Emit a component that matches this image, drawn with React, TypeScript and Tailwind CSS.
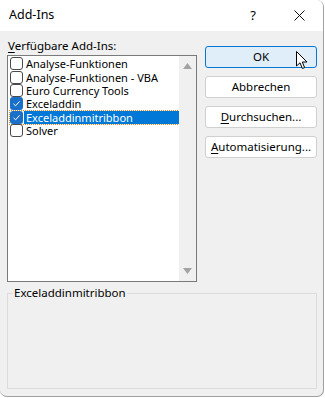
import React from 'react';

const font = { fontFamily: '"Segoe UI", "Noto Sans", "Liberation Sans", sans-serif' };

const items = [
  { label: 'Analyse-Funktionen', checked: false },
  { label: 'Analyse-Funktionen - VBA', checked: false },
  { label: 'Euro Currency Tools', checked: false },
  { label: 'Exceladdin', checked: true },
  { label: 'Exceladdinmitribbon', checked: true, selected: true },
  { label: 'Solver', checked: false },
];

function CheckBox({ checked }: { checked: boolean }) {
  if (checked) {
    return (
      <div className="flex h-[13px] w-[13px] shrink-0 items-center justify-center rounded-[3px] bg-[#1a6fc9]">
        <svg width="9" height="9" viewBox="0 0 9 9" fill="none">
          <path d="M1.5 4.8 L3.6 6.8 L7.6 2.3" stroke="white" strokeWidth="1" />
        </svg>
      </div>
    );
  }
  return <div className="h-[13px] w-[13px] shrink-0 rounded-[3px] border border-[#4a4a4a] bg-white" />;
}

function Btn({ children, primary }: { children: React.ReactNode; primary?: boolean }) {
  return (
    <div
      className={
        'flex h-[22px] w-[112px] items-center justify-center rounded-[3px] border text-[11.5px] text-black ' +
        (primary ? 'border-[#0078d4] bg-[#e0eef9]' : 'border-[#d0d0d0] bg-white')
      }
    >
      {children}
    </div>
  );
}

export default function App() {
  return (
    <div className="h-[398px] w-[325px] overflow-hidden bg-white" style={font}>
      <div className="flex h-[397px] w-[324px] flex-col overflow-hidden rounded-tr-[7px] rounded-b-[7px] border-r border-b border-[#a0a0a0] bg-[#f0f0f0]">
        {/* title bar */}
        <div className="flex h-[31px] shrink-0 items-center bg-white text-[12.5px] text-black">
          <span className="pl-[9px]">Add-Ins</span>
          <span className="ml-auto w-[20px] text-center text-[13px]">?</span>
          <span className="ml-[26px] mr-[14px] flex w-[20px] justify-center">
            <svg width="11" height="11" viewBox="0 0 11 11">
              <path d="M0.5 0.5 L10.5 10.5 M10.5 0.5 L0.5 10.5" stroke="#111" strokeWidth="1" />
            </svg>
          </span>
        </div>

        <div className="flex pl-[7px] pt-[7px]">
          <div className="flex flex-col">
            <div className="h-[17px] pl-[1px] text-[11.5px] leading-[15px] text-black">
              <span className="underline underline-offset-2">V</span>erfügbare Add-Ins:
            </div>
            <div className="flex h-[227px] w-[190px] border border-[#7a7a7a] bg-white">
              <div className="flex flex-1 flex-col pl-[2px] pt-[1px]">
                {items.map((it) => (
                  <div
                    key={it.label}
                    className={
                      'flex h-[13.4px] items-center text-[11px] leading-[13px] ' +
                      (it.selected ? 'outline-1 outline-dotted outline-[#e08a2c]' : '')
                    }
                  >
                    <CheckBox checked={it.checked} />
                    <div
                      className={
                        'ml-[1px] flex h-full flex-1 items-center pl-[2px] ' +
                        (it.selected ? 'bg-[#0078d7] text-white' : 'text-black')
                      }
                    >
                      {it.label}
                    </div>
                  </div>
                ))}
              </div>
              <div className="flex w-[17px] flex-col items-center justify-between bg-[#f0f0f0] py-[7px]">
                <svg width="9" height="6" viewBox="0 0 9 6">
                  <path d="M4.5 0 L9 6 L0 6 Z" fill="#a3a3a3" />
                </svg>
                <svg width="9" height="6" viewBox="0 0 9 6">
                  <path d="M0 0 L9 0 L4.5 6 Z" fill="#a3a3a3" />
                </svg>
              </div>
            </div>
          </div>

          <div className="ml-[8px] flex flex-col gap-[8px] pt-[8px]">
            <div className="relative">
              <Btn primary>OK</Btn>
              <svg className="absolute left-[91px] top-[5px]" width="12" height="19" viewBox="0 0 12 19">
                <path d="M0.5 0.5 L0.5 15 L4 11.8 L6.4 17.5 L8.6 16.6 L6.3 11 L11 11 Z" fill="white" stroke="black" strokeWidth="1" />
              </svg>
            </div>
            <Btn>Abbrechen</Btn>
            <Btn>
              <span className="underline underline-offset-2">D</span>urchsuchen...
            </Btn>
            <Btn>
              <span className="underline underline-offset-2">A</span>utomatisierung...
            </Btn>
          </div>
        </div>

        {/* group box */}
        <div className="relative ml-[7px] mt-[11px] h-[96px] w-[310px] border border-[#dcdcdc]">
          <span className="absolute left-[5px] top-[-9px] bg-[#f0f0f0] px-[1px] text-[11.5px] leading-[15px] text-black">
            Exceladdinmitribbon
          </span>
        </div>
      </div>
    </div>
  );
}
